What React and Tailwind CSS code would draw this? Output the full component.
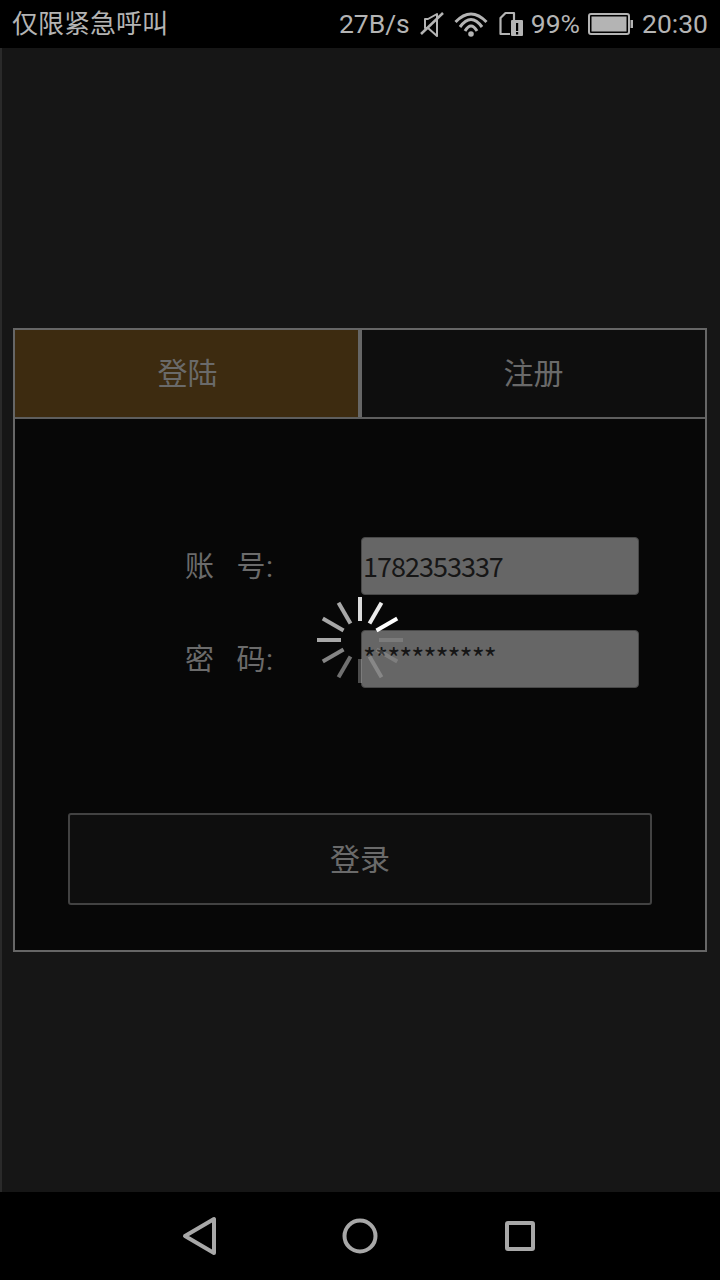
import React from 'react';

const cjk = { fontFamily: 'Roboto, "Noto Sans CJK SC", sans-serif' };
const cjkOnly = { fontFamily: '"Noto Sans CJK SC", sans-serif' };

// tick colours going clockwise from 12 o'clock
const ticks = [
    '#dcdcdc', '#ececec', '#ffffff', 'rgba(255,255,255,0.14)', 'rgba(255,255,255,0.16)', 'rgba(255,255,255,0.22)',
    'rgba(255,255,255,0.28)', '#707070', '#858585', '#a8a8a8', '#a8a8a8', '#a8a8a8',
];

const Spinner = () => (
    <svg width="90" height="90" viewBox="0 0 90 90" className="absolute left-[315px] top-[595px]">
        {ticks.map((color, i) => (
            <line key={i} x1="45" y1="2" x2="45" y2="26" stroke={color} strokeWidth="4" transform={`rotate(${i * 30} 45 45)`} />
        ))}
    </svg>
);

const StatusBar = () => (
    <div className="flex h-12 items-center justify-between bg-black pl-3 pr-3 text-[26.5px] text-[#b4b4b4]">
        <span className="text-[26px]">仅限紧急呼叫</span>
        <div className="flex items-center">
            <span>27B/s</span>
            <svg width="24" height="26" viewBox="0 0 24 26" className="ml-[10px]" fill="none" stroke="#b4b4b4" strokeWidth="2">
                <path d="M5 8v9h3l9 8V3L8 8z" strokeLinejoin="round" />
                <path d="M1 23 23 2" strokeWidth="2.500" />
            </svg>
            <svg width="34" height="26" viewBox="0 0 34 26" className="ml-[10px]" fill="none" stroke="#b4b4b4" strokeWidth="3">
                <path d="M1.500 11Q17 -5 32.500 11" />
                <path d="M6 16Q17 1 28 16" />
                <path d="M11 20Q17 10 23 20" />
                <circle cx="17" cy="23" r="2.800" fill="#b4b4b4" stroke="none" />
            </svg>
            <svg width="25" height="26" viewBox="0 0 25 26" className="ml-[11px]" fill="none">
                <path d="M11 23H1.500V7l5-5H15v7" stroke="#b4b4b4" strokeWidth="2.200" strokeLinejoin="round" />
                <rect x="12" y="9" width="12" height="16" rx="1" fill="#b4b4b4" />
                <path d="M17 12h2.200v8H17zM17 21h2.200v2.500H17z" fill="#000" />
            </svg>
            <span className="ml-[7px]">99%</span>
            <svg width="46" height="24" viewBox="0 0 46 24" className="ml-[8px]" fill="none">
                <rect x="1" y="2" width="40" height="20" rx="2" stroke="#b4b4b4" strokeWidth="2" />
                <rect x="3.500" y="4.500" width="35" height="15" fill="#b4b4b4" />
                <rect x="42.500" y="8" width="2.500" height="8" fill="#b4b4b4" />
            </svg>
            <span className="ml-[8px]">20:30</span>
        </div>
    </div>
);

const Field = ({ label, value, stars }) => (
    <div className="flex h-[58px] items-center">
        <div className="flex w-[89px] translate-y-[2px] gap-[22px] whitespace-nowrap text-[29px] tracking-[0.5px] text-[#6b6b6b]">
            <span>{label[0]}</span>
            <span>{label[1]}:</span>
        </div>
        <div
            style={cjkOnly}
            className={`ml-[87px] flex h-[58px] w-[278px] items-center rounded-[4px] border-[1.5px] border-[#484848] bg-[#666666] pl-[1px] text-[#161616] ${stars ? 'pb-[4px] text-[28px] tracking-[-1px]' : 'text-[27px] tracking-[-1px]'}`}
        >
            {value}
        </div>
    </div>
);

export default function App() {
    return (
        <div className="relative flex h-[1280px] w-[720px] flex-col overflow-hidden bg-black" style={cjk}>
            <StatusBar />

            <div className="flex flex-1 flex-col border-l-2 border-[#2a2a2a] bg-[#161616] pl-[11px] pr-[13px] pt-[280px]">
                <div className="flex h-[624px] flex-col border-2 border-[#666666] bg-[#070707]">
                    <div className="flex h-[89px] border-b-2 border-[#5e5e5e]">
                        <div className="flex w-[343px] items-center justify-center bg-[#3d2b10] pl-[2px] text-[30px] text-[#6a6a6a]">登陆</div>
                        <div className="w-[4px] bg-[#666666]" />
                        <div className="flex flex-1 items-center justify-center bg-[#0e0e0e] text-[30px] text-[#6a6a6a]">注册</div>
                    </div>

                    <div className="flex flex-1 flex-col">
                        <div className="flex flex-col gap-[35px] pl-[170px] pt-[118px]">
                            <Field label="账号" value="1782353337" />
                            <Field label="密码" value="***********" stars />
                        </div>
                        <div className="ml-[53px] mt-[125px] flex h-[92px] w-[584px] items-center justify-center rounded-[3px] border-2 border-[#424242] bg-[#0e0e0e] text-[30px] text-[#6a6a6a]">
                            登录
                        </div>
                    </div>
                </div>
            </div>

            <div className="flex h-[88px] items-center gap-[124px] bg-black pl-[182px]">
                <svg width="36" height="40" viewBox="0 0 36 40" fill="none" stroke="#a8a8a8" strokeWidth="4" strokeLinejoin="round"><path d="M32 3v34L3 20z" /></svg>
                <svg width="36" height="36" viewBox="0 0 36 36" fill="none" stroke="#a8a8a8" strokeWidth="4"><circle cx="18" cy="18" r="15.500" /></svg>
                <svg width="30" height="30" viewBox="0 0 30 30" className="ml-[3px]" fill="none" stroke="#a8a8a8" strokeWidth="4" strokeLinejoin="round"><rect x="2" y="2" width="26" height="26" rx="1" /></svg>
            </div>

            <Spinner />
        </div>
    );
}
